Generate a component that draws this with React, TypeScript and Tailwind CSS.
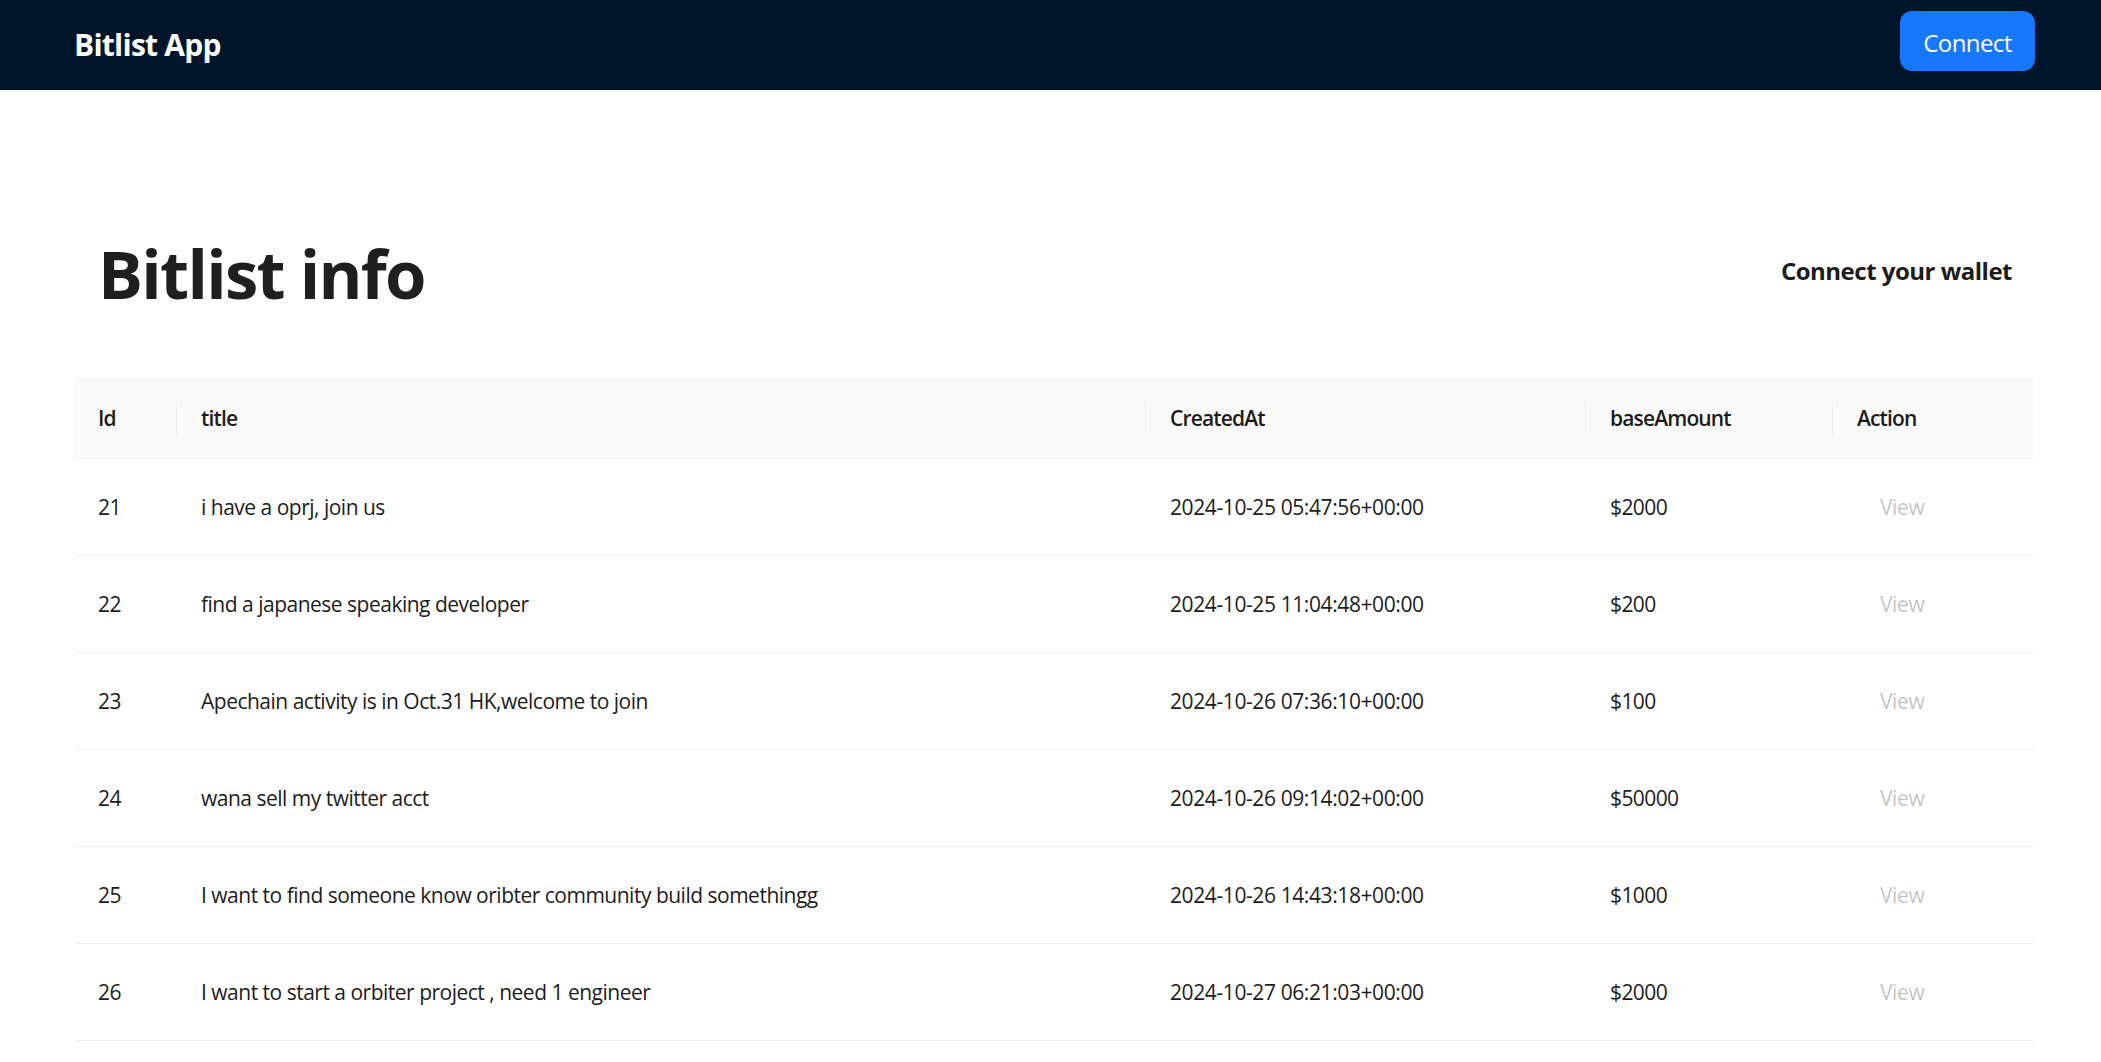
import React from 'react';

interface Bit {
  id: number;
  title: string;
  createdAt: string;
  baseAmount: string;
}

const bits: Bit[] = [
  { id: 21, title: 'i have a oprj, join us', createdAt: '2024-10-25 05:47:56+00:00', baseAmount: '$2000' },
  { id: 22, title: 'find a japanese speaking developer', createdAt: '2024-10-25 11:04:48+00:00', baseAmount: '$200' },
  { id: 23, title: 'Apechain activity is in Oct.31 HK,welcome to join', createdAt: '2024-10-26 07:36:10+00:00', baseAmount: '$100' },
  { id: 24, title: 'wana sell my twitter acct', createdAt: '2024-10-26 09:14:02+00:00', baseAmount: '$50000' },
  { id: 25, title: 'I want to find someone know oribter community build somethingg', createdAt: '2024-10-26 14:43:18+00:00', baseAmount: '$1000' },
  { id: 26, title: 'I want to start a orbiter project , need 1 engineer', createdAt: '2024-10-27 06:21:03+00:00', baseAmount: '$2000' },
];

const rowGrid = 'grid grid-cols-[103px_969px_440px_247px_201px]';

const HeadCell: React.FC<{ label: string; divider?: boolean }> = ({ label, divider = true }) => (
  <div className="flex items-center pt-[1px]">
    {divider && <div className="-ml-px h-[33px] w-px bg-[#f0f0f0]" />}
    <span className="pl-6 pt-[2px]">{label}</span>
  </div>
);

const App: React.FC = () => {
  return (
    <div className="min-h-[1062px] bg-white font-['Open_Sans','Liberation_Sans',sans-serif] text-[21px] text-[#1c1c1c]">
      <header className="flex h-[90px] items-center justify-between bg-[#001529] pl-[74px] pr-[66px]">
        <div className="mb-[2px] text-[30px] font-bold tracking-[-0.75px] text-white">Bitlist App</div>
        <button className="mb-[8px] h-[60px] w-[135px] rounded-[12px] bg-[#1677ff] pt-[3px] text-[24px] tracking-[-0.6px] text-white">
          Connect
        </button>
      </header>

      <main className="pl-[74px] pr-[67px] pt-[120px]">
        <div className="flex h-[167px] items-start justify-between pl-6 pr-[22px]">
          <h1 className="pt-[21px] text-[67px] font-bold leading-[85px] tracking-[-1.7px] text-[#1f1f1f]">Bitlist info</h1>
          <div className="pt-[43px] text-[24px] font-bold tracking-[-0.5px] text-[#1c1c1c]">Connect your wallet</div>
        </div>

        <div className={`${rowGrid} h-[82px] border-b border-[#f0f0f0] bg-[#fafafa] font-semibold tracking-[-0.85px]`}>
          <HeadCell label="Id" divider={false} />
          <HeadCell label="title" />
          <HeadCell label="CreatedAt" />
          <HeadCell label="baseAmount" />
          <HeadCell label="Action" />
        </div>

        {bits.map(bit => (
          <div key={bit.id} className={`${rowGrid} h-[97px] items-center border-b border-[#f0f0f0] pt-[2px] tracking-[-0.4px]`}>
            <div className="pl-6">{bit.id}</div>
            <div className="pl-6 tracking-[-0.5px]">{bit.title}</div>
            <div className="pl-6">{bit.createdAt}</div>
            <div className="pl-6 tracking-[-0.6px]">{bit.baseAmount}</div>
            <div className="pl-[47px] text-black/25">View</div>
          </div>
        ))}
      </main>
    </div>
  );
};

export default App;
